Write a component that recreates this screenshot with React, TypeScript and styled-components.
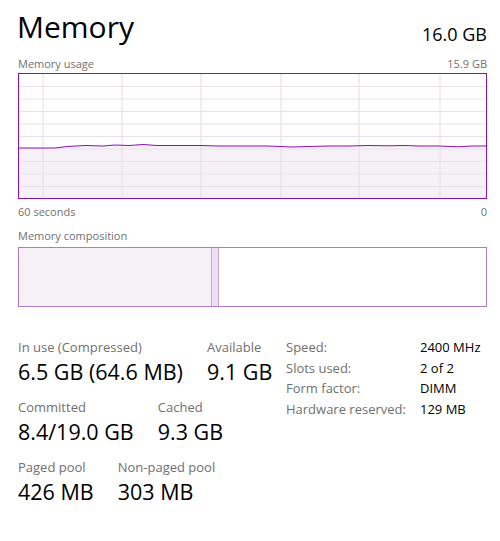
import React from "react";
import styled, { createGlobalStyle } from "styled-components";

const Global = createGlobalStyle`
  body {
    margin: 0;
    background: #ffffff;
    font-family: "Open Sans", "Noto Sans", sans-serif;
    color: #000;
  }
`;

const Page = styled.div`
  width: 500px;
  height: 541px;
  box-sizing: border-box;
  padding: 1px 13px 0 18px;
  overflow: hidden;
`;

const Header = styled.div`
  display: flex;
  justify-content: space-between;
  align-items: flex-end;
  height: 53px;
`;

const Title = styled.div`
  font-size: 30px;
  line-height: 38px;
  margin-left: -1px;
  margin-bottom: 8px;
`;

const Total = styled.div`
  font-size: 18px;
  line-height: 24px;
  margin-bottom: 8px;
`;

const Caption = styled.div<{ $h?: number }>`
  display: flex;
  justify-content: space-between;
  font-size: 11px;
  line-height: 15px;
  color: #707070;
  height: ${(p) => p.$h ?? 18}px;
  align-items: center;
`;

const ChartBox = styled.div`
  width: 469px;
  height: 126px;
  border: 1px solid #8b12ae;
  box-sizing: border-box;
  svg {
    display: block;
  }
`;

const Composition = styled.div`
  display: flex;
  width: 469px;
  height: 60px;
  border: 1px solid #b07ac4;
  box-sizing: border-box;
`;

const Segment = styled.div<{ $w: number; $bg: string; $edge?: string }>`
  width: ${(p) => p.$w}px;
  background: ${(p) => p.$bg};
  border-right: ${(p) => (p.$edge ? `1px solid ${p.$edge}` : "none")};
`;

const Stats = styled.div`
  display: flex;
  margin-top: 31px;
`;

const Left = styled.div`
  display: flex;
  flex-direction: column;
  gap: 10px;
  width: 268px;
`;

const StatRow = styled.div`
  display: flex;
  gap: 24px;
`;

const Stat = styled.div`
  display: flex;
  flex-direction: column;
`;

const Label = styled.div`
  font-size: 13px;
  line-height: 18px;
  color: #707070;
`;

const Value = styled.div`
  font-size: 21.5px;
  line-height: 32px;
  color: #000;
`;

const Props = styled.div`
  display: grid;
  grid-template-columns: 134px auto;
  grid-auto-rows: 20.5px;
  align-content: start;
  font-size: 13px;
`;

const PropName = styled.div`
  color: #707070;
  line-height: 18px;
`;

const PropValue = styled.div`
  color: #000;
  line-height: 18px;
`;

const W = 467;
const H = 124;

function UsageChart() {
  const verticals = [24, 103, 182, 262, 340, 421];
  const horizontals = Array.from({ length: 9 }, (_, i) => (i + 1) * 12.5);
  const pts: [number, number][] = [
    [0, 74], [36, 74], [48, 72.5], [66, 71.5], [84, 72], [96, 71], [110, 71.5],
    [124, 70.5], [138, 71.5], [160, 71.5], [182, 71.5], [200, 72], [230, 72],
    [248, 72], [262, 72.5], [272, 73], [290, 72.5], [310, 72], [330, 72],
    [350, 71.5], [370, 71.8], [385, 71.5], [400, 72], [420, 72], [440, 72.8],
    [452, 72], [467, 72],
  ];
  const line = pts.map((p, i) => `${i ? "L" : "M"}${p[0]},${p[1]}`).join(" ");
  const area = `${line} L${W},${H} L0,${H} Z`;
  return (
    <svg width={W} height={H} viewBox={`0 0 ${W} ${H}`}>
      <path d={area} fill="#f5f1f7" />
      {horizontals.map((y) => (
        <line key={y} x1={0} x2={W} y1={y} y2={y} stroke="#ebe1ee" strokeWidth={1} />
      ))}
      {verticals.map((x) => (
        <line key={x} x1={x} x2={x} y1={0} y2={H} stroke="#e6dbe9" strokeWidth={1} />
      ))}
      <path d={line} fill="none" stroke="#8b12ae" strokeWidth={1} />
    </svg>
  );
}

export default function App() {
  return (
    <Page>
      <Global />
      <Header>
        <Title>Memory</Title>
        <Total>16.0 GB</Total>
      </Header>
      <Caption $h={19}>
        <span>Memory usage</span>
        <span>15.9 GB</span>
      </Caption>
      <ChartBox>
        <UsageChart />
      </ChartBox>
      <Caption $h={24}>
        <span>60 seconds</span>
        <span>0</span>
      </Caption>
      <Caption $h={24}>
        <span>Memory composition</span>
      </Caption>
      <Composition>
        <Segment $w={193} $bg="#f5f1f7" $edge="#c7a4d3" />
        <Segment $w={6} $bg="#efdff4" $edge="#c7a4d3" />
        <Segment $w={268} $bg="#ffffff" />
      </Composition>
      <Stats>
        <Left>
          <StatRow>
            <Stat>
              <Label>In use (Compressed)</Label>
              <Value>6.5 GB (64.6 MB)</Value>
            </Stat>
            <Stat>
              <Label>Available</Label>
              <Value>9.1 GB</Value>
            </Stat>
          </StatRow>
          <StatRow>
            <Stat>
              <Label>Committed</Label>
              <Value>8.4/19.0 GB</Value>
            </Stat>
            <Stat>
              <Label>Cached</Label>
              <Value>9.3 GB</Value>
            </Stat>
          </StatRow>
          <StatRow>
            <Stat>
              <Label>Paged pool</Label>
              <Value>426 MB</Value>
            </Stat>
            <Stat>
              <Label>Non-paged pool</Label>
              <Value>303 MB</Value>
            </Stat>
          </StatRow>
        </Left>
        <Props>
          <PropName>Speed:</PropName>
          <PropValue>2400 MHz</PropValue>
          <PropName>Slots used:</PropName>
          <PropValue>2 of 2</PropValue>
          <PropName>Form factor:</PropName>
          <PropValue>DIMM</PropValue>
          <PropName>Hardware reserved:</PropName>
          <PropValue>129 MB</PropValue>
        </Props>
      </Stats>
    </Page>
  );
}
